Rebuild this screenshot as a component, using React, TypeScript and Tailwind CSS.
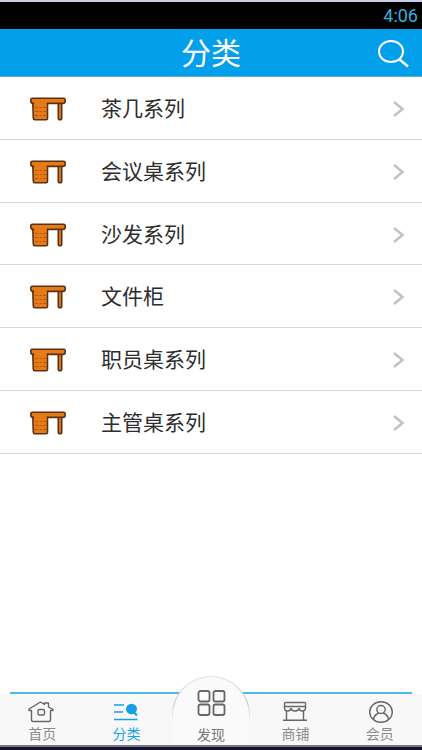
import type { ReactNode } from "react";

const categories = [
  "茶几系列",
  "会议桌系列",
  "沙发系列",
  "文件柜",
  "职员桌系列",
  "主管桌系列",
];

const DeskIcon = () => (
  <svg
    width="36"
    height="24"
    viewBox="0 0 36 24"
    fill="#e67a17"
    stroke="#5a3013"
    strokeWidth="1.6"
    strokeLinejoin="round"
    aria-hidden="true"
  >
    <path d="M2.8 5.5H17.5V21.5Q17.5 22.8 16.2 22.8H4.8Q3.3 22.8 3.3 21Z" />
    <path d="M28.3 5.5H31.7V21Q31.7 22.8 30 22.8T28.3 21Z" />
    <path d="M2.3 1.2H33.7Q35.2 1.2 35.2 2.7V4Q35.2 6.4 32.7 6.4H3.3Q.8 6.4 .8 4V2.7Q.8 1.2 2.3 1.2Z" />
    <path d="M4.1 5H16.7V9H4.1Z" stroke="none" />
    <path
      d="M5 10.5H8M9.500 10.5H11.5M13 10.5H16M5 14.5H8M9.500 14.5H11.5M13 14.5H16M5 18.5H8M9.500 18.5H11.5M13 18.5H16"
      stroke="#b4580d"
      strokeWidth="1"
    />
  </svg>
);

const ChevronIcon = () => (
  <svg width="12" height="16" viewBox="0 0 12 16" fill="none" aria-hidden="true">
    <path d="M1 1L9.5 8L1 15" stroke="#c3c3c3" strokeWidth="2.6" />
  </svg>
);

const SearchIcon = () => (
  <svg
    width="32"
    height="28"
    viewBox="0 0 32 28"
    fill="none"
    stroke="currentColor"
    strokeWidth="2"
    aria-hidden="true"
  >
    <ellipse cx="13" cy="11.5" rx="12" ry="10.5" />
    <path d="M21 19L30 26.5" strokeWidth="2.5" />
  </svg>
);

const HomeIcon = () => (
  <svg
    width="28"
    height="24"
    viewBox="0 0 28 24"
    fill="none"
    stroke="currentColor"
    strokeWidth="1.4"
    strokeLinejoin="round"
    strokeLinecap="round"
    aria-hidden="true"
  >
    <path d="M3.5 10.5H1V9L12.5 2L16.500 4.5V3H20.5V7L25 9.5V10.5H22.5V20Q22.5 21.5 21 21.5H5Q3.5 21.5 3.5 20Z" />
    <rect x="10" y="9.5" width="6.5" height="5.5" rx="1.5" />
  </svg>
);

const CategoryIcon = () => (
  <svg
    width="28"
    height="24"
    viewBox="0 0 28 24"
    fill="none"
    stroke="currentColor"
    strokeWidth="1.6"
    aria-hidden="true"
  >
    <path d="M1 5H11M1 12H10M1 19.5H24.5" />
    <ellipse cx="18.5" cy="9" rx="5.5" ry="5.2" fill="currentColor" stroke="none" />
    <path d="M20.5 12L24 15.5" strokeWidth="2" />
  </svg>
);

const GridIcon = () => (
  <svg
    width="30"
    height="28"
    viewBox="0 0 30 28"
    fill="none"
    stroke="#666666"
    strokeWidth="1.8"
    aria-hidden="true"
  >
    <rect x="2.5" y="2" width="11" height="10.5" rx="2" />
    <rect x="17.5" y="2" width="11" height="10.5" rx="2" />
    <rect x="2.5" y="15.5" width="11" height="10.5" rx="2" />
    <rect x="17.5" y="15.5" width="11" height="10.5" rx="2" />
  </svg>
);

const ShopIcon = () => (
  <svg
    width="28"
    height="24"
    viewBox="0 0 28 24"
    fill="none"
    stroke="currentColor"
    strokeWidth="1.4"
    strokeLinejoin="round"
    aria-hidden="true"
  >
    <path d="M4.5 2.5H23.5Q24.5 2.5 24.5 3.5V6.5H3.5V3.5Q3.5 2.5 4.5 2.5Z" />
    <path d="M3.5 6.5V8Q3.500 11 6.500 11T10 8.5Q10.500 11 14 11T18 8.5Q18.500 11 21.500 11T24.500 8V6.5" />
    <path d="M5.5 11V20M22.5 11V20M2 20.3H26" />
  </svg>
);

const MemberIcon = () => (
  <svg
    width="28"
    height="24"
    viewBox="0 0 28 24"
    fill="none"
    stroke="currentColor"
    strokeWidth="1.4"
    aria-hidden="true"
  >
    <ellipse cx="15" cy="12" rx="11.3" ry="10.3" />
    <ellipse cx="15" cy="9.5" rx="4.2" ry="4" />
    <path d="M7.5 19.5Q8 15 12.7 13M22.5 19.5Q22 15 17.3 13" />
  </svg>
);

interface TabProps {
  label: string;
  icon: ReactNode;
  active?: boolean;
}

const Tab = ({ label, icon, active }: TabProps) => (
  <a
    href="#"
    aria-current={active ? "page" : undefined}
    className={`flex flex-1 flex-col items-center pt-[6px] ${
      active ? "text-[#159fe6]" : "text-[#666666]"
    }`}
  >
    {icon}
    <span className={`text-sm leading-5 ${active ? "" : "text-[#8c8c8c]"}`}>{label}</span>
  </a>
);

const App = () => {
  return (
    <div className="flex min-h-screen flex-col bg-white font-['Liberation_Sans','Noto_Sans_CJK_SC',sans-serif]">
      <div className="flex h-[29px] items-center justify-end border-t-2 border-[#c9cbe8] bg-black pr-1 font-['Roboto',sans-serif] text-lg leading-6 text-[#35b0dc]">
        4:06
      </div>

      <header className="grid h-12 grid-cols-[1fr_auto_1fr] items-center border-b border-[#5fa9cf] bg-[#029fea] px-3 pt-[2px] text-white">
        <h1 className="col-start-2 text-[30px] leading-10">分类</h1>
        <button type="button" aria-label="搜索" className="justify-self-end">
          <SearchIcon />
        </button>
      </header>

      <main className="flex-1">
        <ul className="grid min-h-[377px] auto-rows-fr">
          {categories.map((name) => (
            <li key={name} className="border-b border-[#d9d9d9]">
              <a href="#" className="flex h-full items-center pt-[2px] pr-[17px] pl-[30px] text-[#2d2d2d]">
                <DeskIcon />
                <span className="ml-[35px] flex-1 text-[21px] leading-8">{name}</span>
                <ChevronIcon />
              </a>
            </li>
          ))}
        </ul>
      </main>

      <footer>
        <div className="mx-[10px] h-[2px] bg-[#4db8ea]" />
        <nav className="flex h-[51px] bg-[#f8f8f8]">
          <Tab label="首页" icon={<HomeIcon />} />
          <Tab label="分类" icon={<CategoryIcon />} active />
          <a href="#" className="relative flex flex-1 flex-col items-center justify-end text-[#777777]">
            <span className="absolute bottom-0 left-1/2 h-[69px] w-[78px] -translate-x-1/2 rounded-t-full bg-linear-to-b from-[#e4e4e4] via-[#c8c8c8] via-40% to-[#f8f8f8] to-65% p-px">
              <span className="block h-full rounded-t-full bg-[#fafafa]" />
            </span>
            <span className="relative">
              <GridIcon />
            </span>
            <span className="relative mt-2 text-sm leading-5">发现</span>
          </a>
          <Tab label="商铺" icon={<ShopIcon />} />
          <Tab label="会员" icon={<MemberIcon />} />
        </nav>
        <div className="h-[5px] border-t-2 border-[#77768a] bg-[#17132f]" />
      </footer>
    </div>
  );
};

export default App;
